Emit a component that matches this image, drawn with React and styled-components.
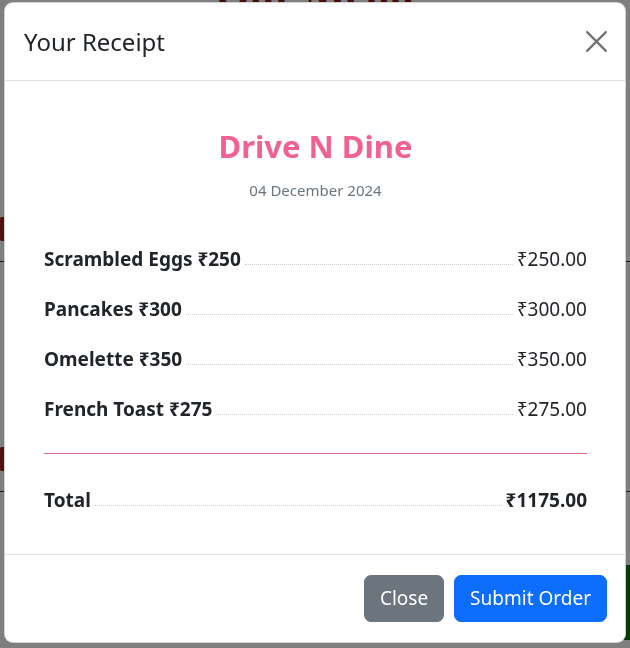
import React from "react";
import styled, { createGlobalStyle } from "styled-components";

const GlobalStyle = createGlobalStyle`
  html, body {
    margin: 0;
    padding: 0;
    width: 630px;
    height: 648px;
    overflow: hidden;
    font-family: "Noto Sans", "Open Sans", "DejaVu Sans", sans-serif;
    color: #212529;
    background: #fff;
  }
  * { box-sizing: border-box; }
`;

const items = [
  { name: "Scrambled Eggs", price: 250 },
  { name: "Pancakes", price: 300 },
  { name: "Omelette", price: 350 },
  { name: "French Toast", price: 275 },
];

// page behind the modal, only slivers of it show through the backdrop
const Page = styled.div`
  width: 630px;
  height: 648px;
  display: flex;
  flex-direction: column;
  align-items: center;
`;

const PageTitle = styled.h1`
  margin: -28px 0 0;
  font-size: 44px;
  line-height: 44px;
  color: #8b1a1a;
  font-family: "Liberation Serif", serif;
  font-weight: 700;
`;

const MenuSection = styled.div`
  width: 100%;
  height: 100px;
  margin-top: ${(p) => p.mt}px;
  border-bottom: 1px solid #333;
  display: flex;
  align-items: flex-end;
`;

const RedMark = styled.span`
  display: block;
  width: 10px;
  height: 24px;
  margin-bottom: 20px;
  background: #a61c1c;
  border-radius: 2px;
`;

const GreenBlock = styled.div`
  align-self: flex-end;
  width: 20px;
  height: 75px;
  margin-top: auto;
  margin-bottom: 8px;
  background: #0a7a0a;
`;

const Backdrop = styled.div`
  position: fixed;
  inset: 0;
  background: rgba(0, 0, 0, 0.5);
`;

const ModalWrap = styled.div`
  position: fixed;
  inset: 0;
  padding: 2px 4px 0 4px;
  display: flex;
  flex-direction: column;
`;

const Dialog = styled.div`
  flex-shrink: 0;
  background: #fff;
  border: 1px solid rgba(0, 0, 0, 0.175);
  border-radius: 9px;
  display: flex;
  flex-direction: column;
  overflow: hidden;
`;

const Header = styled.div`
  flex-shrink: 0;
  height: 78px;
  padding: 0 17px 0 19px;
  display: flex;
  align-items: center;
  justify-content: space-between;
  border-bottom: 1px solid #dee2e6;
`;

const Title = styled.h5`
  margin: 0;
  font-size: 24px;
  font-weight: 400;
  line-height: 1.5;
  color: #212529;
`;

const CloseX = styled.button`
  width: 24px;
  height: 24px;
  padding: 0;
  border: 0;
  background: transparent;
  opacity: 0.55;
  cursor: pointer;
  display: flex;
  align-items: center;
  justify-content: center;
`;

const Body = styled.div`
  padding: 44px 38px 39px 39px;
  border-bottom: 1px solid #dee2e6;
`;

const Brand = styled.h2`
  margin: 0;
  text-align: center;
  font-size: 31px;
  line-height: 43px;
  font-weight: 700;
  color: #f06292;
`;

const DateLine = styled.div`
  margin-top: 10px;
  text-align: center;
  font-size: 15px;
  line-height: 24px;
  color: #6c757d;
`;

const Rows = styled.div`
  margin-top: 43px;
  display: flex;
  flex-direction: column;
  gap: 21px;
`;

const Row = styled.div`
  display: flex;
  align-items: baseline;
  font-size: 19px;
  line-height: 29px;
`;

const Label = styled.span`
  font-weight: 700;
  white-space: nowrap;
`;

const Leader = styled.span`
  flex: 1;
  margin: 0 4px;
  border-bottom: 1px dotted #cfcfcf;
  transform: translateY(-1px);
`;

const Amount = styled.span`
  font-weight: ${(p) => (p.bold ? 700 : 400)};
  white-space: nowrap;
`;

const Divider = styled.div`
  height: 1px;
  margin: 29px 0 32px;
  background: #d8649c;
`;

const Footer = styled.div`
  flex-shrink: 0;
  height: 87px;
  padding: 0 18px;
  display: flex;
  align-items: center;
  justify-content: flex-end;
  gap: 10px;
`;

const Button = styled.button`
  height: 47px;
  padding: 0 15px;
  border: 1px solid ${(p) => p.bg};
  border-radius: 7px;
  background: ${(p) => p.bg};
  color: #fff;
  font-family: inherit;
  font-size: 19px;
  line-height: 1.5;
  cursor: pointer;
`;

const ReceiptRow = ({ label, amount, bold }) => (
  <Row>
    <Label>{label}</Label>
    <Leader />
    <Amount bold={bold}>{amount}</Amount>
  </Row>
);

const App = () => {
  const total = items.reduce((sum, item) => sum + item.price, 0);
  return (
    <>
      <GlobalStyle />
      <Page>
        <PageTitle>Our Menu</PageTitle>
        <MenuSection mt={146}>
          <RedMark />
        </MenuSection>
        <MenuSection mt={130}>
          <RedMark />
        </MenuSection>
        <GreenBlock />
      </Page>
      <Backdrop />
      <ModalWrap>
        <Dialog>
          <Header>
            <Title>Your Receipt</Title>
            <CloseX aria-label="Close">
              <svg width="23" height="23" viewBox="0 0 16 16">
                <path
                  d="M1.5 1.5 L14.5 14.5 M14.5 1.5 L1.5 14.5"
                  stroke="#000"
                  strokeWidth="1.6"
                  strokeLinecap="round"
                />
              </svg>
            </CloseX>
          </Header>
          <Body>
            <Brand>Drive N Dine</Brand>
            <DateLine>04 December 2024</DateLine>
            <Rows>
              {items.map((item) => (
                <ReceiptRow
                  key={item.name}
                  label={`${item.name} ₹${item.price}`}
                  amount={`₹${item.price.toFixed(2)}`}
                />
              ))}
            </Rows>
            <Divider />
            <ReceiptRow label="Total" amount={`₹${total.toFixed(2)}`} bold />
          </Body>
          <Footer>
            <Button bg="#6c757d">Close</Button>
            <Button bg="#0d6efd">Submit Order</Button>
          </Footer>
        </Dialog>
      </ModalWrap>
    </>
  );
};

export default App;
